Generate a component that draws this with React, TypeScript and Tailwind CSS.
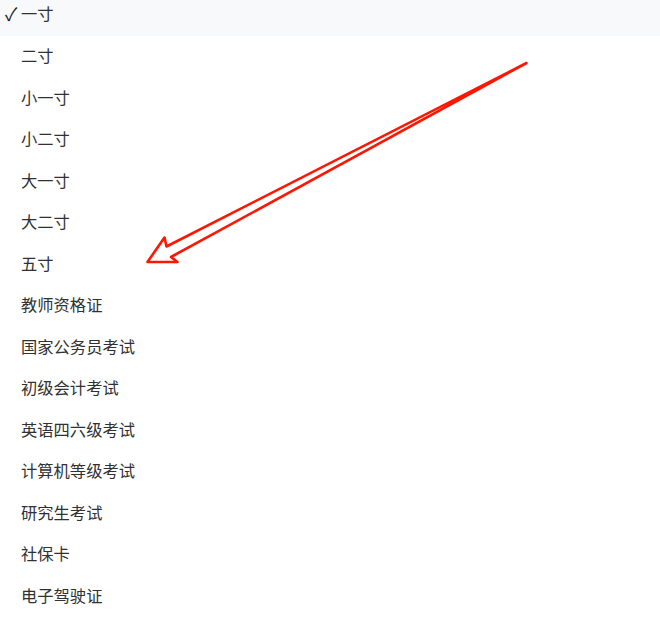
import React from "react";

const items = [
  "一寸",
  "二寸",
  "小一寸",
  "小二寸",
  "大一寸",
  "大二寸",
  "五寸",
  "教师资格证",
  "国家公务员考试",
  "初级会计考试",
  "英语四六级考试",
  "计算机等级考试",
  "研究生考试",
  "社保卡",
  "电子驾驶证",
];

export default function App() {
  return (
    <div
      className="relative w-[660px] h-[617px] overflow-hidden bg-white"
      style={{ fontFamily: '"Microsoft YaHei", "Noto Sans CJK SC", "Noto Sans", sans-serif' }}
    >
      <ul className="mt-[-7px] flex flex-col">
        {items.map((t, i) => (
          <li
            key={t}
            className={`relative flex h-[41.5px] items-center pl-[5px] text-[16.3px] text-[#303133] ${
              i === 0 ? "z-10 bg-[#f8f9fb] pb-[1px] shadow-[0_1px_0_#f8f9fb]" : ""
            }`}
          >
            <span className="w-[16px] text-[18px] leading-none text-[#222]">{i === 0 ? "✓" : ""}</span>
            <span>{t}</span>
          </li>
        ))}
      </ul>
      <svg
        className="pointer-events-none absolute left-0 top-0 z-20"
        width="660"
        height="617"
        viewBox="0 0 660 617"
      >
        <path
          d="M526.5 63 L166.5 246.5 L164.5 237.5 L147.5 262 L177.5 262 L171 257 Z"
          fill="none"
          stroke="#ff1500"
          strokeWidth="2.6"
          strokeLinejoin="round"
          strokeLinecap="round"
        />
      </svg>
    </div>
  );
}
